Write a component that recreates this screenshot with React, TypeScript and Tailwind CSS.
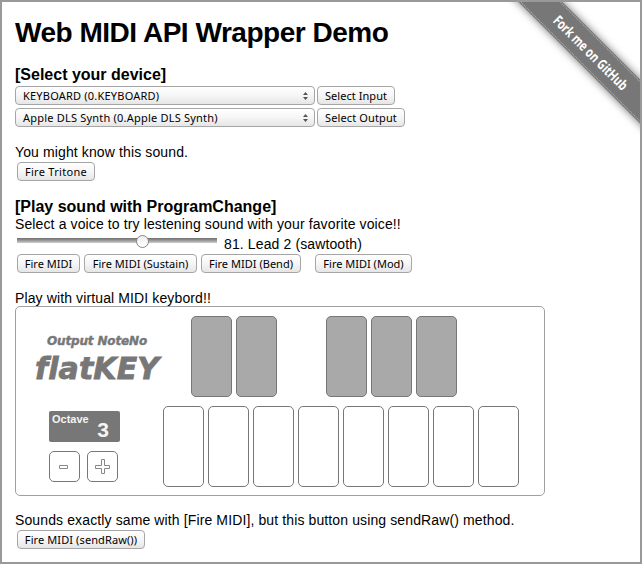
import type { ReactNode } from 'react';

const ui = "font-['Noto_Sans','Open_Sans',sans-serif]";

function Button({ className, children }: { className: string; children: ReactNode }) {
  return (
    <button
      className={`${ui} flex h-[19px] shrink-0 items-center justify-center rounded-[4px] border border-[#a6a6a6] bg-linear-to-b from-white via-[#f6f6f6] to-[#e6e6e6] text-[11px] leading-none whitespace-nowrap text-black ${className}`}
    >
      {children}
    </button>
  );
}

function Select({ children }: { children: ReactNode }) {
  return (
    <div
      className={`${ui} flex h-[19px] w-[300px] shrink-0 items-center justify-between rounded-[4px] border border-[#a6a6a6] bg-linear-to-b from-white via-[#f6f6f6] to-[#e6e6e6] pr-[6px] pl-[7px] text-[11px] leading-none tracking-[0.21px] whitespace-nowrap`}
    >
      <span>{children}</span>
      <svg width="5" height="8" viewBox="0 0 5 8" fill="#555">
        <path d="M2.5 0 5 3H0zM2.5 8 0 5h5z" />
      </svg>
    </div>
  );
}

function BlackKey() {
  return <div className="h-[81px] w-[41px] rounded-[5px] border border-[#777] bg-[#a9a9a9]" />;
}

export default function App() {
  return (
    <div className="relative h-[564px] w-[642px] overflow-hidden border-2 border-[#999] bg-white pt-[15px] pl-[13px] font-['Liberation_Sans',Arial,sans-serif] text-[14px] leading-4 tracking-[0.12px] text-black">
      <h1 className="text-[28px] leading-8 font-bold tracking-[-0.48px] whitespace-nowrap">
        Web MIDI API Wrapper Demo
      </h1>
      <h2 className="mt-[17px] text-[16px] leading-[18px] font-bold tracking-normal">
        [Select your device]
      </h2>
      <div className="mt-[2px] flex gap-[2px]">
        <Select>KEYBOARD (0.KEYBOARD)</Select>
        <Button className="w-[78px] tracking-[0.05px]">Select Input</Button>
      </div>
      <div className="mt-[3px] flex gap-[2px]">
        <Select>Apple DLS Synth (0.Apple DLS Synth)</Select>
        <Button className="w-[88px] tracking-[0.12px]">Select Output</Button>
      </div>
      <p className="mt-[17px]">You might know this sound.</p>
      <div className="mt-[2px] ml-[2px] flex">
        <Button className="w-[78px] tracking-[0.3px]">Fire Tritone</Button>
      </div>
      <h2 className="mt-[17px] text-[16px] leading-[18px] font-bold tracking-normal">
        [Play sound with ProgramChange]
      </h2>
      <p>Select a voice to try lestening sound with your favorite voice!!</p>
      <div className="mt-[4px] ml-[2px] flex h-4">
        <div className="mt-[2px] mr-[7px] flex h-[5px] w-[200px] items-center bg-linear-to-b from-[#707070] via-[#999] to-[#d0d0d0]">
          <div className="mt-px ml-[119px] h-[13px] w-[13px] shrink-0 rounded-full border border-[#888] bg-linear-to-b from-[#eee] to-white" />
        </div>
        <span>81. Lead 2 (sawtooth)</span>
      </div>
      <div className="mt-[2px] ml-[2px] flex">
        <Button className="w-[63px] tracking-normal">Fire MIDI</Button>
        <Button className="ml-[4px] w-[113px] tracking-[0.05px]">Fire MIDI (Sustain)</Button>
        <Button className="ml-[4px] w-[100px] tracking-[0.02px]">Fire MIDI (Bend)</Button>
        <Button className="ml-[14px] w-[97px] tracking-normal">Fire MIDI (Mod)</Button>
      </div>
      <p className="mt-[17px]">Play with virtual MIDI keybord!!</p>
      <div className="flex h-[190px] w-[530px] rounded-[5px] border border-[#a0a0a0]">
        <div className="w-[147px] pl-[33px] tracking-normal text-[#777]">
          <div className="-ml-[14px] pt-[26px] font-['DejaVu_Sans',sans-serif] font-bold italic">
            <div className="ml-[12px] text-[12px] leading-[16px] tracking-[-0.15px] whitespace-nowrap [-webkit-text-stroke:0.4px_#777]">Output NoteNo</div>
            <div className="mt-[4px] text-[30px] leading-[32px] tracking-[0.1px] whitespace-nowrap [font-variant-ligatures:none] [-webkit-text-stroke:0.8px_#777]">flatKEY</div>
          </div>
          <div className="mt-[26px] flex h-[31px] w-[71px] justify-between rounded-[2px] bg-[#777] pr-[11px] pl-[3px] font-bold text-[#f4f4f4]">
            <span className="mt-[2px] text-[11px] leading-[12px]">Octave</span>
            <span className="mt-[7px] text-[21px] leading-[24px]">3</span>
          </div>
          <div className="mt-[9px] flex gap-[7px]">
            <div className="flex h-[31px] w-[31px] items-center justify-center rounded-[5px] border border-[#777]">
              <svg width="29" height="29" fill="none" stroke="#888"><path d="M9.5 13.5h8v3h-8z" /></svg>
            </div>
            <div className="flex h-[31px] w-[31px] items-center justify-center rounded-[5px] border border-[#777]">
              <svg width="29" height="29" fill="none" stroke="#888"><path d="M13.5 7.5h3v6h5v3h-5v5h-3v-5h-6v-3h6z" /></svg>
            </div>
          </div>
        </div>
        <div className="pt-[9px]">
          <div className="ml-[28px] flex gap-[4px]">
            <BlackKey />
            <BlackKey />
            <div className="w-[41px]" />
            <BlackKey />
            <BlackKey />
            <BlackKey />
          </div>
          <div className="mt-[9px] flex gap-[4px]">
            {[0, 1, 2, 3, 4, 5, 6, 7].map((n) => (
              <div key={n} className="h-[81px] w-[41px] rounded-[5px] border border-[#777] bg-white" />
            ))}
          </div>
        </div>
      </div>
      <p className="mt-[16px] whitespace-nowrap">
        Sounds exactly same with [Fire MIDI], but this button using sendRaw() method.
      </p>
      <div className="mt-[2px] ml-[2px] flex">
        <Button className="w-[128px] tracking-[0.1px]">Fire MIDI (sendRaw())</Button>
      </div>
      <div className="absolute top-[35px] left-[459px] flex h-[31px] w-[260px] rotate-45 items-center justify-center bg-[#777] shadow-[0_0_8px_rgba(0,0,0,0.55)]">
        <div className="absolute inset-x-0 top-[1px] bottom-[1px] border-y border-dotted border-[#b5b5b5]" />
        <span className="scale-x-[0.76] font-['Open_Sans','Noto_Sans',sans-serif] text-[14px] leading-none font-bold tracking-[-0.1px] whitespace-nowrap text-white">Fork me on GitHub</span>
      </div>
    </div>
  );
}
